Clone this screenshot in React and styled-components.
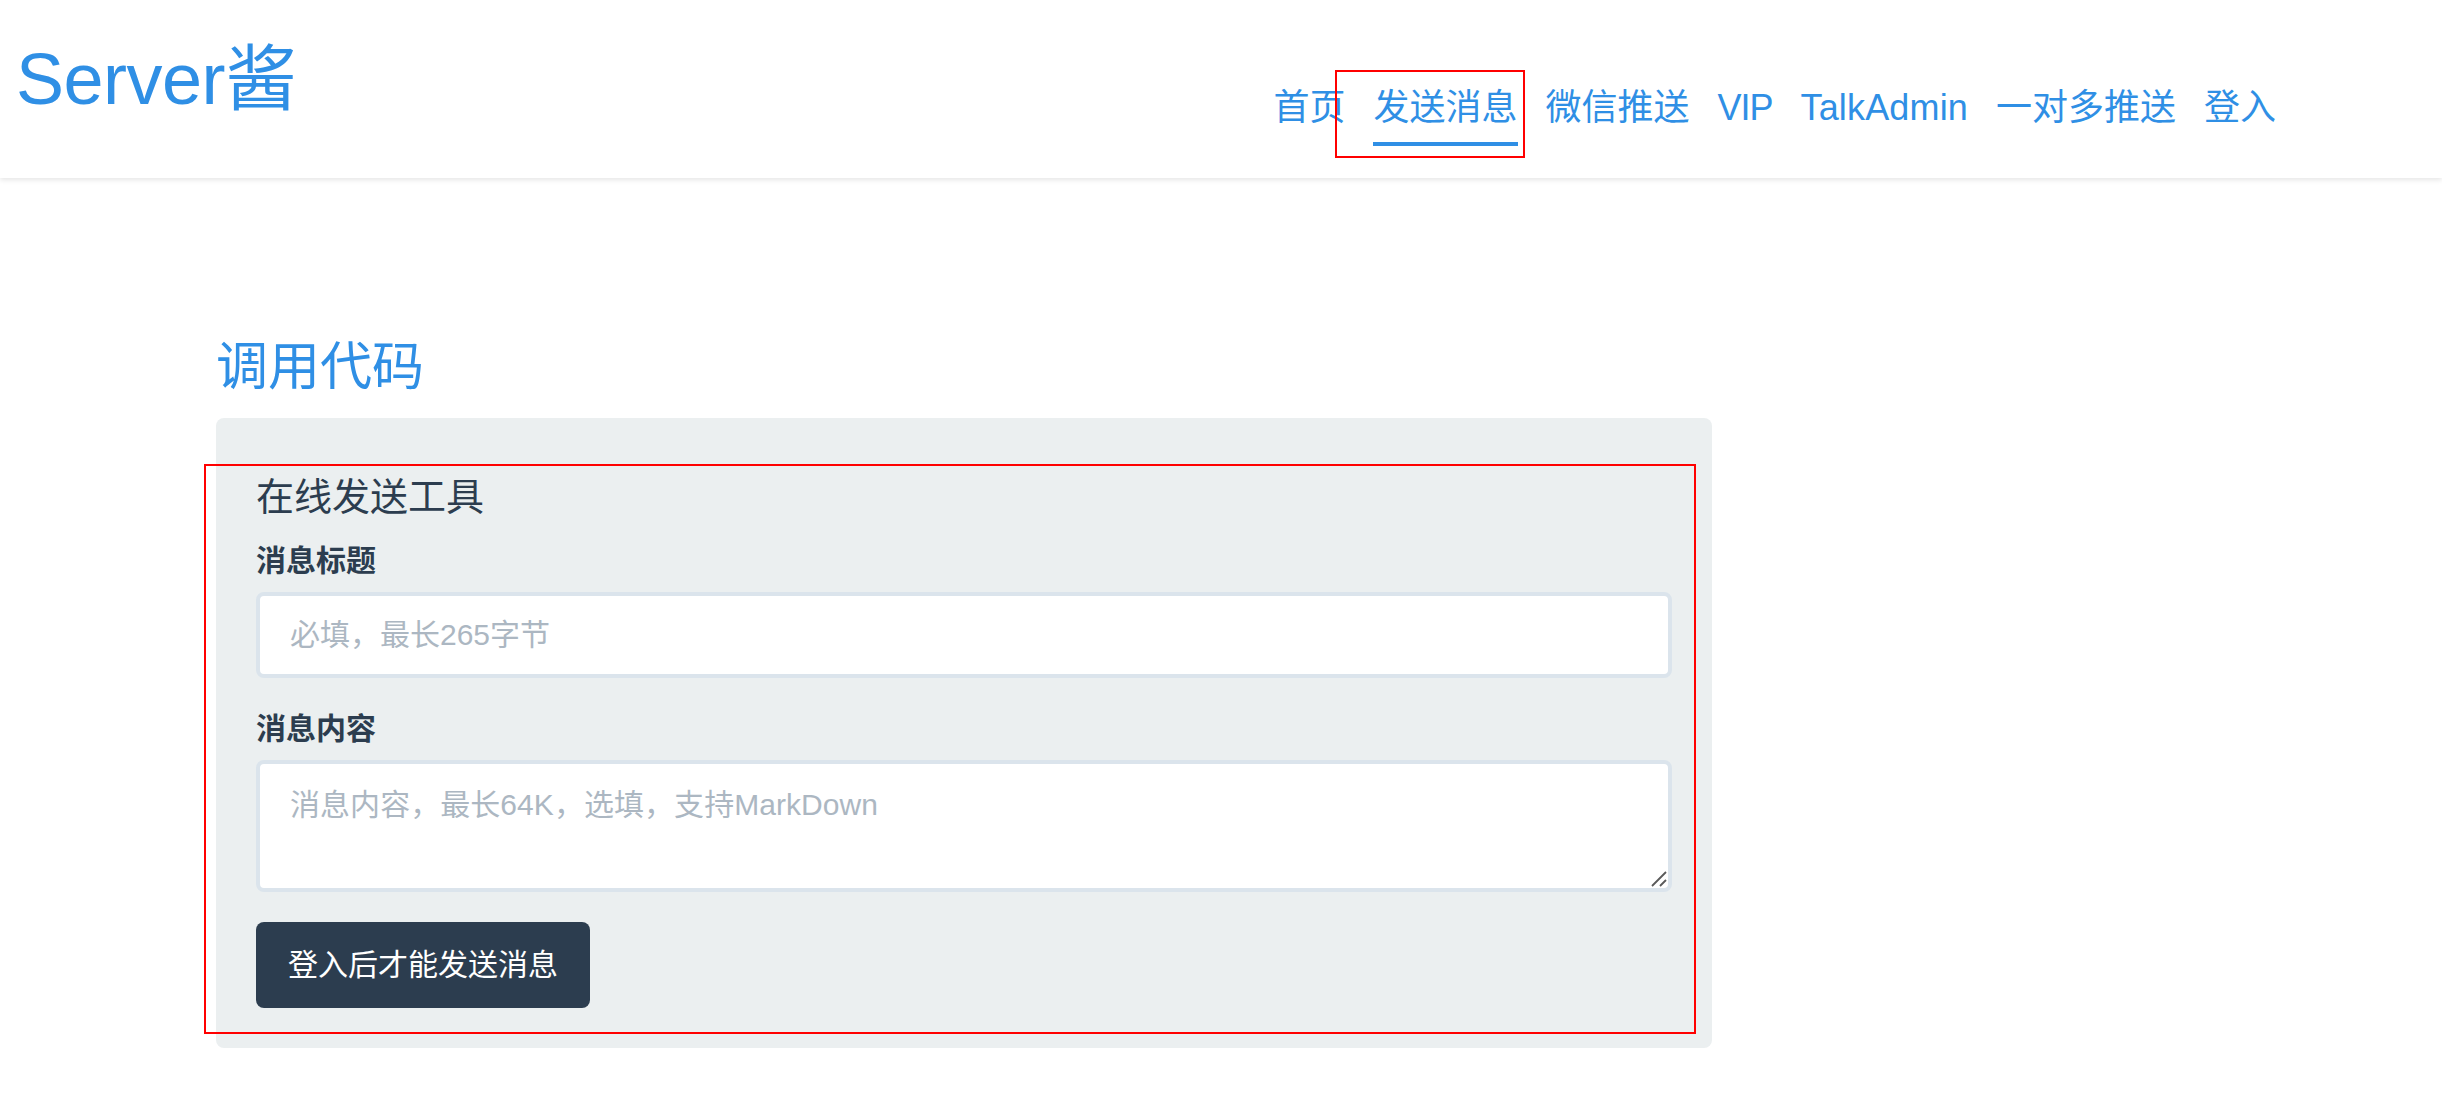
import React from 'react';
import styled, {createGlobalStyle} from 'styled-components';

const links = [
  {text: '首页'},
  {text: '发送消息', active: true},
  {text: '微信推送'},
  {text: 'VIP', spacing: '-1px'},
  {text: 'TalkAdmin', spacing: '0.15px'},
  {text: '一对多推送'},
  {text: '登入'},
];

const App = () => {
  return (
    <>
      <GlobalStyle />
      <Page>
        <Header>
          <Logo>Server酱</Logo>
          <Nav>
            {links.map((link) => (
              <NavLink
                key={link.text}
                $active={link.active}
                $spacing={link.spacing}>
                {link.text}
                {link.active && <LinkMark />}
              </NavLink>
            ))}
          </Nav>
        </Header>
        <Main>
          <Title>调用代码</Title>
          <Card>
            <h3>在线发送工具</h3>
            <Label htmlFor="text">消息标题</Label>
            <Input id="text" placeholder="必填，最长265字节" />
            <Label htmlFor="desp">消息内容</Label>
            <Area>
              <Textarea
                id="desp"
                placeholder="消息内容，最长64K，选填，支持MarkDown"
              />
              <Grip viewBox="0 0 16 16">
                <path d="M1 15 L15 1 M9 15 L15 9" />
              </Grip>
            </Area>
            <Button>登入后才能发送消息</Button>
            <FormMark />
          </Card>
        </Main>
      </Page>
    </>
  );
};

const GlobalStyle = createGlobalStyle`
  * {
    margin: 0;
    padding: 0;
    box-sizing: border-box;
  }
  body {
    background: #fff;
    color: #2c3d4f;
    overflow: hidden;
  }
  body, input, textarea, button {
    font-family: 'Liberation Sans', 'Noto Sans CJK SC', sans-serif;
  }
`;

const Page = styled.div`
  min-height: 1106px;
`;

const Header = styled.header`
  height: 178px;
  padding: 0 166px 0 16px;
  display: flex;
  justify-content: space-between;
  align-items: flex-start;
  box-shadow: 0 2px 5px rgba(0, 0, 0, 0.1);
`;

const Logo = styled.h1`
  margin-top: 27px;
  font-size: 72px;
  font-weight: 400;
  line-height: 104px;
  letter-spacing: -0.5px;
  color: #2f8fe5;
`;

const Nav = styled.nav`
  margin-top: 72px;
  display: flex;
  gap: 28px;
`;

const NavLink = styled.a`
  position: relative;
  height: 74px;
  font-size: 36px;
  line-height: 72px;
  letter-spacing: ${(props) => props.$spacing || 'normal'};
  white-space: nowrap;
  color: #2f8fe5;
  border-bottom: 4px solid ${(props) => (props.$active ? '#2f8fe5' : 'transparent')};
`;

/* red outline round the current link */
const LinkMark = styled.span`
  position: absolute;
  top: -2px;
  left: -38px;
  width: 190px;
  height: 88px;
  border: 2px solid #ff0000;
  pointer-events: none;
`;

const Main = styled.main`
  width: 1496px;
  margin: 150px 0 0 216px;
`;

const Title = styled.h2`
  height: 90px;
  font-size: 52px;
  font-weight: 400;
  line-height: 78px;
  color: #2f8fe5;
`;

const Card = styled.section`
  position: relative;
  height: 630px;
  padding: 50px 40px 40px;
  border-radius: 8px;
  background: #ebeff0;
  h3 {
    height: 60px;
    font-size: 38px;
    font-weight: 400;
    line-height: 58px;
  }
`;

const Label = styled.label`
  display: block;
  height: 64px;
  padding-top: 11px;
  font-size: 30px;
  font-weight: 700;
  line-height: 44px;
`;

const Input = styled.input`
  display: block;
  width: 100%;
  height: 86px;
  margin-bottom: 18px;
  padding: 0 30px;
  border: 4px solid #dbe4ec;
  border-radius: 8px;
  background: #fff;
  font-size: 30px;
  outline: none;
  &::placeholder {
    color: #acb7c2;
    opacity: 1;
  }
`;

const Area = styled.div`
  position: relative;
  height: 132px;
  margin-bottom: 30px;
`;

const Textarea = styled(Input).attrs({as: 'textarea'})`
  height: 132px;
  margin-bottom: 0;
  padding: 19px 30px;
  line-height: 44px;
  letter-spacing: 0.05px;
  resize: none;
`;

const Grip = styled.svg`
  position: absolute;
  right: 5px;
  bottom: 5px;
  width: 16px;
  height: 16px;
  fill: none;
  stroke: #5a5a5a;
  stroke-width: 1.8;
`;

const Button = styled.button`
  display: block;
  height: 86px;
  padding: 0 32px;
  border: none;
  border-radius: 8px;
  background: #2c3d4f;
  color: #fff;
  font-size: 30px;
  line-height: 86px;
  cursor: pointer;
`;

/* red outline round the whole form */
const FormMark = styled.span`
  position: absolute;
  top: 46px;
  left: -12px;
  width: 1492px;
  height: 570px;
  border: 2px solid #ff0000;
  pointer-events: none;
`;

export default App;
